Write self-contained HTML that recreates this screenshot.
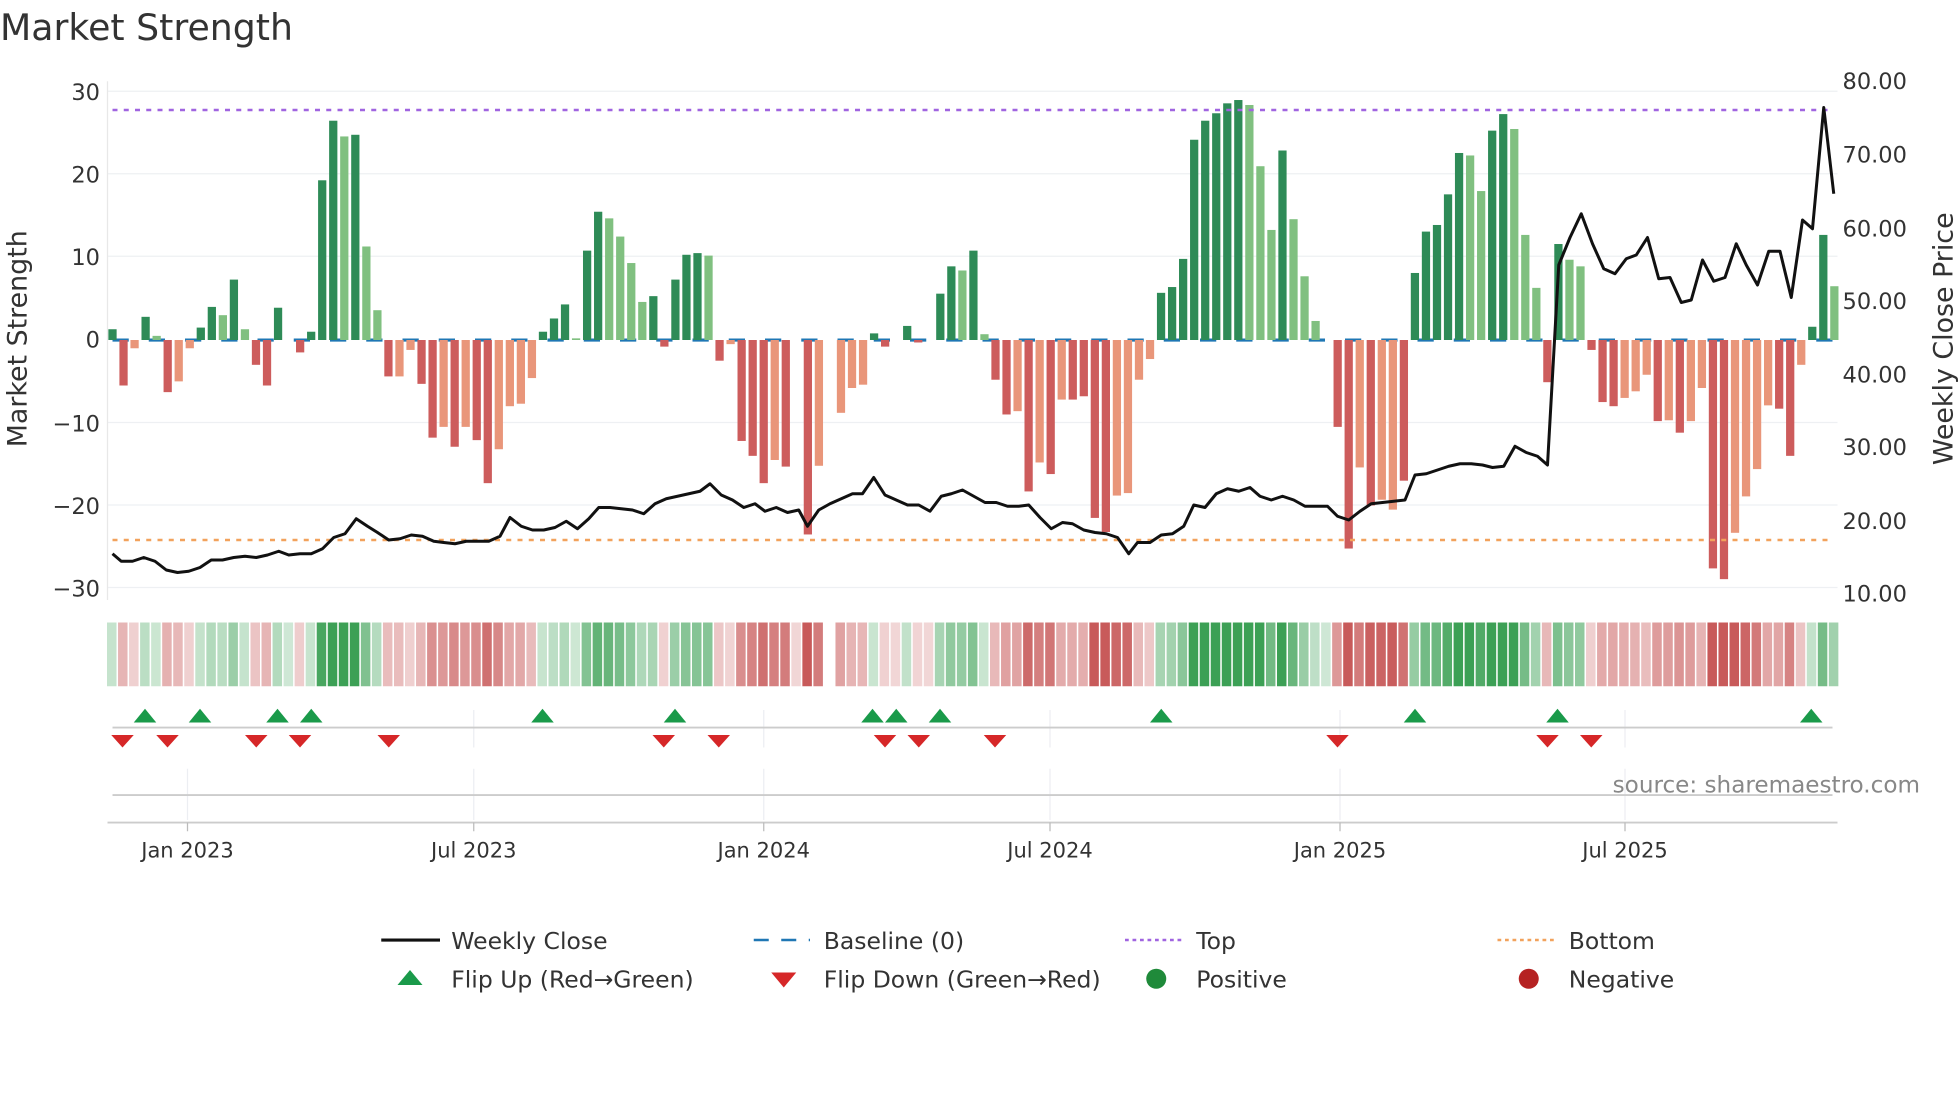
<!DOCTYPE html>
<html><head><meta charset="utf-8"><style>
html,body{margin:0;padding:0;background:#fff;width:1960px;height:1102px;overflow:hidden}
svg text{font-family:"DejaVu Sans","Liberation Sans",sans-serif}
</style></head><body>
<svg id="s" width="1960" height="1102" viewBox="0 0 1960 1102" xmlns="http://www.w3.org/2000/svg">
<g transform="scale(1.25)" id="g">
<text x="0" y="32" font-size="29" fill="#333">Market Strength</text>
<g stroke="#eef0f3" stroke-width="1">
<line x1="86" x2="1470" y1="73" y2="73"/><line x1="86" x2="1470" y1="139" y2="139"/><line x1="86" x2="1470" y1="205" y2="205"/><line x1="86" x2="1470" y1="338" y2="338"/><line x1="86" x2="1470" y1="404" y2="404"/><line x1="86" x2="1470" y1="470" y2="470"/>
</g>
<line x1="86" x2="86" y1="65" y2="480" stroke="#e8e8e8"/>
<g font-size="18" fill="#333" text-anchor="end">
<text x="80" y="80">30</text><text x="80" y="146">20</text><text x="80" y="212">10</text><text x="80" y="278">0</text><text x="80" y="345">−10</text><text x="80" y="411">−20</text><text x="80" y="477">−30</text>
</g>
<g font-size="18" fill="#333">
<text x="1474" y="71">80.00</text><text x="1474" y="130">70.00</text><text x="1474" y="189">60.00</text><text x="1474" y="247">50.00</text><text x="1474" y="306">40.00</text><text x="1474" y="364">30.00</text><text x="1474" y="423">20.00</text><text x="1474" y="481">10.00</text>
</g>
<text transform="translate(21,271) rotate(-90)" font-size="21.5" fill="#333" text-anchor="middle">Market Strength</text>
<text transform="translate(1562,271) rotate(-90)" font-size="21.5" fill="#333" text-anchor="middle">Weekly Close Price</text>
<line x1="90" x2="1466" y1="272" y2="272" stroke="#1f77b4" stroke-width="2.5" stroke-dasharray="13 16"/>
<g id="bars"></g>
<line x1="90" x2="1466" y1="88" y2="88" stroke="#a064e0" stroke-width="2" stroke-dasharray="4 5"/>
<line x1="90" x2="1466" y1="432" y2="432" stroke="#f2a25c" stroke-width="2" stroke-dasharray="4 5"/>
<polyline id="pl" fill="none" stroke="#111" stroke-width="2.4" stroke-linejoin="round"/>
<g id="strip"></g>
<g stroke="#eceef2"><line x1="150" x2="150" y1="615" y2="656"/><line x1="379" x2="379" y1="568" y2="598"/><line x1="379" x2="379" y1="615" y2="656"/><line x1="611" x2="611" y1="568" y2="598"/><line x1="611" x2="611" y1="615" y2="656"/><line x1="840" x2="840" y1="568" y2="598"/><line x1="840" x2="840" y1="615" y2="656"/><line x1="1072" x2="1072" y1="568" y2="598"/><line x1="1072" x2="1072" y1="615" y2="656"/><line x1="1300" x2="1300" y1="568" y2="598"/><line x1="1300" x2="1300" y1="615" y2="656"/></g>
<line x1="90" x2="1466" y1="582" y2="582" stroke="#ccc" stroke-width="1.5"/>
<line x1="90" x2="1466" y1="636" y2="636" stroke="#ccc" stroke-width="1.5"/>
<line x1="86" x2="1470" y1="658" y2="658" stroke="#ccc" stroke-width="1.5"/>
<g id="tri"></g>
<text x="1536" y="634" font-size="18.5" fill="#888" text-anchor="end">source: sharemaestro.com</text>
<g stroke="#bbb"><line x1="150" x2="150" y1="658" y2="665"/><line x1="379" x2="379" y1="658" y2="665"/><line x1="611" x2="611" y1="658" y2="665"/><line x1="840" x2="840" y1="658" y2="665"/><line x1="1072" x2="1072" y1="658" y2="665"/><line x1="1300" x2="1300" y1="658" y2="665"/></g>
<g font-size="16.8" fill="#333" text-anchor="middle">
<text x="150" y="686">Jan 2023</text><text x="379" y="686">Jul 2023</text><text x="611" y="686">Jan 2024</text><text x="840" y="686">Jul 2024</text><text x="1072" y="686">Jan 2025</text><text x="1300" y="686">Jul 2025</text>
</g>
<line x1="305" x2="352" y1="752" y2="752" stroke="#111" stroke-width="2.5"/>
<line x1="603" x2="648" y1="752" y2="752" stroke="#1f77b4" stroke-width="2" stroke-dasharray="12 10"/>
<line x1="900" x2="946" y1="752" y2="752" stroke="#a064e0" stroke-width="2" stroke-dasharray="3 3"/>
<line x1="1198" x2="1244" y1="752" y2="752" stroke="#f2a25c" stroke-width="2" stroke-dasharray="3 3"/>
<polygon points="318,788 338,788 328,776" fill="#1a9a4a"/>
<polygon points="617,778 637,778 627,790" fill="#d62728"/>
<circle cx="925" cy="783" r="8" fill="#1f8a3a"/>
<circle cx="1223" cy="783" r="8" fill="#b52222"/>
<g font-size="18.8" fill="#333">
<text x="361" y="759">Weekly Close</text><text x="659" y="759">Baseline (0)</text><text x="957" y="759">Top</text><text x="1255" y="759">Bottom</text>
<text x="361" y="790">Flip Up (Red→Green)</text><text x="659" y="790">Flip Down (Green→Red)</text><text x="957" y="790">Positive</text><text x="1255" y="790">Negative</text>
</g>
</g>
</svg>
<script>
var D="1.3g,-5.5r,-1s,2.8g,0.5l,-6.3r,-5s,-1s,1.5g,4g,3l,7.3g,1.3l,-3r,-5.5r,3.9g,0z,-1.5r,1g,19.3g,26.5g,24.6l,24.8g,11.3l,3.6l,-4.4r,-4.4s,-1.2s,-5.3r,-11.8r,-10.5s,-12.9r,-10.5s,-12.1r,-17.3r,-13.2s,-8s,-7.7s,-4.6s,1g,2.6g,4.3g,0.2l,10.8g,15.5g,14.7l,12.5l,9.3l,4.6l,5.3g,-0.8r,7.3g,10.3g,10.5g,10.2l,-2.5r,-0.5s,-12.2r,-14r,-17.3r,-14.5s,-15.3r,0z,-23.5r,-15.2s,0z,-8.8s,-5.8s,-5.4s,0.8g,-0.8r,0z,1.7g,-0.3r,0z,5.6g,8.9g,8.4l,10.8g,0.7l,-4.8r,-9r,-8.6s,-18.3r,-14.8s,-16.2r,-7.2s,-7.2r,-6.8r,-21.5r,-23.2r,-18.8s,-18.5s,-4.8s,-2.3s,5.7g,6.4g,9.8g,24.2g,26.5g,27.4g,28.6g,29g,28.4l,21l,13.3l,22.9g,14.6l,7.7l,2.3l,0z,-10.5r,-25.2r,-15.4s,-20r,-19.3s,-20.5s,-17r,8.1g,13.1g,13.9g,17.6g,22.6g,22.3l,18l,25.3g,27.3g,25.5l,12.7l,6.3l,-5.1r,11.6g,9.7l,8.9l,-1.2r,-7.5r,-8r,-7s,-6.2s,-4.2s,-9.8r,-9.7s,-11.2r,-9.8s,-5.8s,-27.6r,-28.9r,-23.3s,-18.9s,-15.6s,-7.9s,-8.3r,-14r,-3s,1.6g,12.7g,6.5l".split(",");
var C={g:"#2e8b57",l:"#80c080",r:"#cd5c5c",s:"#e9967a",z:"#fff"};
var NS="http://www.w3.org/2000/svg",bars=document.getElementById("bars"),strip=document.getElementById("strip");
function el(p,tag,a){var e=document.createElementNS(NS,tag);for(var k in a)e.setAttribute(k,a[k]);p.appendChild(e);return e;}
var step=8.83,x0=90,u=6.62,zy=272,prev=1;
function mix(a,b,t){return "rgb("+[0,1,2].map(function(i){return Math.round(a[i]+(b[i]-a[i])*t)}).join(",")+")";}
D.forEach(function(s,i){var v=parseFloat(s),c=s.slice(-1),x=x0+i*step;
 if(v!==0){var h=Math.abs(v)*u;el(bars,"rect",{x:x-3.3,y:v>0?zy-h:zy,width:6.6,height:h,fill:C[c]});}
 var sg=v===0?prev:(v>0?1:-1); prev=sg;
 var t=Math.min(1,0.25+Math.abs(v)/28);
 var col=sg>0?mix([255,255,255],[60,160,85],t):mix([255,255,255],[200,90,90],t);
 if(i===65) col="#fff";
 el(strip,"rect",{x:x-4.4,y:498,width:7.6,height:51,fill:col});
});
var P=[[90,443],[97,449],[106,449],[115,446],[124,449],[133,456],[142,458],[151,457],[160,454],[169,448],[178,448],[187,446],[196,445],[205,446],[214,444],[223,441],[231,444],[240,443],[249,443],[258,439],[267,430],[276,427],[285,415],[294,421],[302,426],[311,432],[320,431],[329,428],[338,429],[347,433],[355,434],[364,435],[373,433],[382,433],[391,433],[400,429],[408,414],[417,421],[426,424],[435,424],[444,422],[453,417],[462,423],[471,415],[479,406],[488,406],[497,407],[506,408],[515,411],[524,403],[533,399],[542,397],[551,395],[560,393],[568,387],[577,396],[586,400],[595,406],[604,403],[612,409],[621,406],[630,410],[639,408],[646,421],[655,408],[664,403],[673,399],[682,395],[690,395],[699,382],[708,396],[717,400],[726,404],[735,404],[744,409],[753,397],[761,395],[770,392],[779,397],[788,402],[797,402],[806,405],[815,405],[823,404],[832,414],[841,423],[850,418],[858,419],[867,424],[876,426],[885,427],[894,430],[903,443],[910,434],[920,434],[929,428],[938,427],[947,421],[955,404],[964,406],[973,395],[982,391],[991,393],[1000,390],[1008,397],[1017,400],[1026,397],[1035,400],[1044,405],[1053,405],[1062,405],[1070,413],[1079,416],[1088,409],[1097,403],[1106,402],[1115,401],[1124,400],[1132,380],[1141,379],[1150,376],[1159,373],[1168,371],[1177,371],[1186,372],[1194,374],[1203,373],[1212,357],[1221,362],[1230,365],[1238,372],[1247,212],[1256,190],[1265,171],[1274,195],[1283,215],[1292,219],[1301,207],[1309,204],[1318,190],[1327,223],[1336,222],[1345,242],[1353,240],[1362,208],[1371,225],[1380,222],[1389,195],[1397,212],[1406,228],[1415,201],[1424,201],[1433,238],[1442,176],[1450,183],[1459,86],[1467,155]];
document.getElementById("pl").setAttribute("points",P.map(function(p){return p.join(",")}).join(" "));
var tri=document.getElementById("tri");
[116,160,222,249,434,540,698,717,752,929,1132,1246,1449].forEach(function(x){el(tri,"polygon",{points:(x-9)+",578 "+(x+9)+",578 "+x+",567",fill:"#1a9a4a"});});
[98,134,205,240,311,531,575,708,735,796,1070,1238,1273].forEach(function(x){el(tri,"polygon",{points:(x-9)+",588 "+(x+9)+",588 "+x+",598",fill:"#d62728"});});
</script>
</body></html>
